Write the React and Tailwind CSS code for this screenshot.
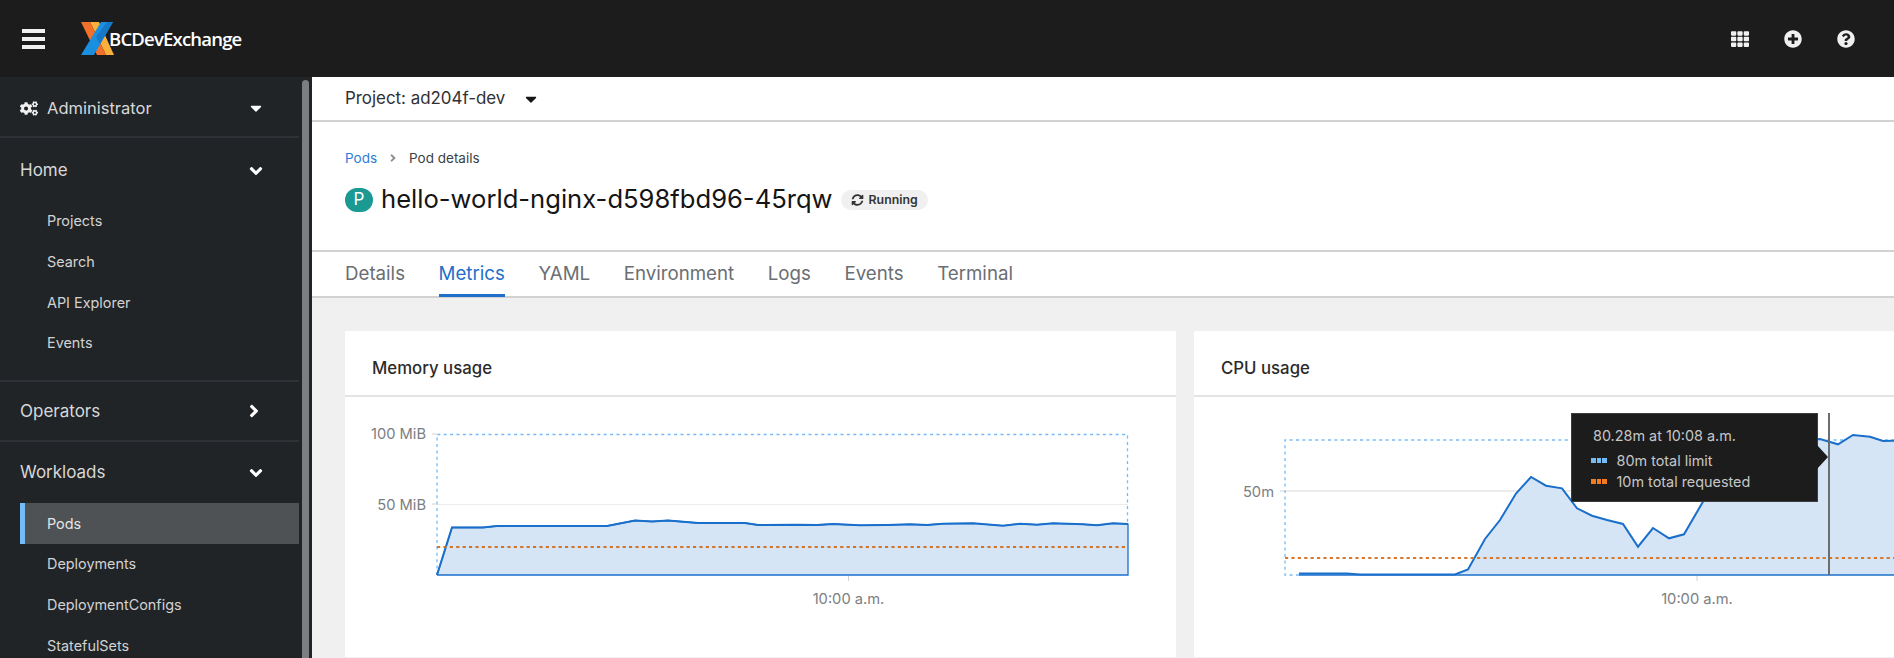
import React from 'react';
import {
  FaAngleDown, FaAngleRight, FaCaretDown, FaCogs, FaPlusCircle,
  FaQuestionCircle, FaSyncAlt, FaTh
} from 'react-icons/fa';

const sans = { fontFamily: '"Inter", "Liberation Sans", sans-serif' };

const memoryLine = '437,575 452,527.5 483,527.5 497,526 607,526 635,520.5 652,521.5 668,520.5 698,523 745,523 758,525 797,524.7 817,525 833,524 860,525.3 887,525 910,524.3 927,525 943,523.7 973,523.3 1003,525.7 1020,523.7 1037,524.7 1053,523.3 1083,524.3 1097,525.3 1113,523.3 1128,524';
const cpuLine = '1299,573.5 1347,573.5 1360,574.5 1455,574.5 1468,569.5 1485,539 1500,520 1516,493.5 1531,477 1546,485.7 1562,488.3 1577,508.3 1592,515.7 1607,520 1623,524 1638,546.7 1653,528 1669,538.3 1684,534.3 1703,501.7 1718,486 1733,470 1749,458 1764,449 1790,441 1820,439 1838,444.3 1853,435 1870,436.7 1883,441 1900,440.7';

const tabs = ['Details', 'Metrics', 'YAML', 'Environment', 'Logs', 'Events', 'Terminal'];

const SubItem = ({ label, active }) => (
  <div className={`h-[40.6px] ml-5 flex items-center text-[14.4px] ${active ? 'bg-[#4f5255] border-l-[5px] border-[#73bcf7] pl-[22px] text-[#e4e4e4]' : 'pl-[27px] text-[#d2d2d2]'}`}>
    {label}
  </div>
);

const Sidebar = () => (
  <div className="w-[312px] shrink-0 bg-[#212427] flex overflow-hidden text-[#d8d8d8]">
    <nav className="w-[299px] shrink-0">
      <div className="h-[61px] flex items-center pl-5 pr-[34px] pt-[3px] border-b-2 border-[#2e3135]">
        <FaCogs className="w-[18px] h-[15px] text-[#f0f0f0]" />
        <span className="ml-[9px] flex-1 text-[16.5px]">Administrator</span>
        <FaCaretDown className="w-[18px] h-[18px] text-white" />
      </div>

      <div className="border-b-2 border-[#2e3135] pb-[17px]">
        <div className="h-[63px] flex items-center justify-between pl-5 pr-[33px] pt-[2px] text-[17px]">
          Home
          <FaAngleDown className="w-[20px] h-[20px] text-white" />
        </div>
        <SubItem label="Projects" />
        <SubItem label="Search" />
        <SubItem label="API Explorer" />
        <SubItem label="Events" />
      </div>

      <div className="h-[60px] flex items-center justify-between pl-5 pr-[35px] border-b-2 border-[#2e3135] text-[17px]">
        Operators
        <FaAngleRight className="w-[20px] h-[20px] text-white" />
      </div>

      <div className="h-[61px] flex items-center justify-between pl-5 pr-[33px] text-[17px]">
        Workloads
        <FaAngleDown className="w-[20px] h-[20px] text-white" />
      </div>
      <SubItem label="Pods" active />
      <SubItem label="Deployments" />
      <SubItem label="DeploymentConfigs" />
      <SubItem label="StatefulSets" />
    </nav>
    <div className="w-[7px] ml-[3px] mt-[3px] bg-[#7c7e80] rounded-t-full" />
  </div>
);

const Logo = () => (
  <div className="flex items-center ml-[36px]">
    <svg width="33" height="34" viewBox="81 19 33 34">
      <polygon points="90,19 99,19 114,52 106,52" fill="#fbb03b" />
      <polygon points="81,19 90,19 106,52 97,52" fill="#f1702a" />
      <polygon points="101,19 113,19 94,52 81,52" fill="#1a8fe0" />
      <polygon points="107,19 113,19 100,41 96,34" fill="#1778c8" />
    </svg>
    <span className="-ml-[5px] text-[18.5px] font-semibold text-white tracking-[-0.8px]" style={{ fontFamily: '"Open Sans", sans-serif' }}>BCDevExchange</span>
  </div>
);

const Header = () => (
  <header className="h-[77px] shrink-0 bg-[#1c1c1c] flex items-center text-[#f0f0f0]">
    <div className="ml-[22px] w-[23px] flex flex-col gap-[4px]">
      <div className="h-[4px] bg-[#f0f0f0]" />
      <div className="h-[4px] bg-[#f0f0f0]" />
      <div className="h-[4px] bg-[#f0f0f0]" />
    </div>
    <Logo />
    <div className="ml-auto mr-[39px] flex items-center gap-[35px]">
      <FaTh className="w-[18px] h-[18px]" />
      <FaPlusCircle className="w-[18px] h-[18px]" />
      <FaQuestionCircle className="w-[18px] h-[18px]" />
    </div>
  </header>
);

const Axis = ({ x, y, label, dy = 5 }) => (
  <>
    <line x1={x - 5} x2={x} y1={y} y2={y} stroke="#d2d2d2" />
    <text x={x - 11} y={y + dy} textAnchor="end" fontSize="14.7" fill="#7b7e82" style={sans}>{label}</text>
  </>
);

const MemoryChart = () => (
  <svg width="831" height="260" viewBox="345 397 831 260" className="block">
    <line x1="437" x2="1128" y1="504.5" y2="504.5" stroke="#ececec" />
    <polyline points="437,575 437,434.5 1127.5,434.5 1127.5,524" fill="none" stroke="#73bcf7" strokeWidth="1.3" strokeDasharray="3 3.4" />
    <polygon points={`${memoryLine} 1128,575`} fill="#d6e5f6" />
    <polyline points={`${memoryLine} 1128,575 437,575`} fill="none" stroke="#1a6fcb" strokeWidth="1.3" />
    <polyline points={memoryLine} fill="none" stroke="#1a6fcb" strokeWidth="2" />
    <line x1="437" x2="1128" y1="547" y2="547" stroke="#d0742a" strokeWidth="2" strokeDasharray="3.2 3.2" />
    <Axis x={437} y={434} label="100 MiB" />
    <Axis x={437} y={504} label="50 MiB" dy={6} />
    <line x1="848.5" x2="848.5" y1="576" y2="581" stroke="#d2d2d2" />
    <text x="848.5" y="604" textAnchor="middle" fontSize="14.7" fill="#7b7e82" style={sans}>10:00 a.m.</text>
  </svg>
);

const CpuChart = () => (
  <svg width="831" height="260" viewBox="1194 397 831 260" className="block">
    <line x1="1285" x2="1900" y1="491" y2="491" stroke="#ececec" strokeWidth="2" />
    <polyline points="1299,575 1285,575 1285,440 1900,440" fill="none" stroke="#73bcf7" strokeWidth="1.3" strokeDasharray="3 3.4" />
    <polygon points={`${cpuLine} 1900,575 1299,575`} fill="#d6e5f6" />
    <line x1="1299" x2="1900" y1="575" y2="575" stroke="#1a6fcb" strokeWidth="1.3" />
    <polyline points={cpuLine} fill="none" stroke="#1a6fcb" strokeWidth="2" />
    <line x1="1285" x2="1900" y1="558" y2="558" stroke="#d9772b" strokeWidth="2" strokeDasharray="3.2 3.2" />
    <Axis x={1285} y={491} label="50m" dy={6} />
    <line x1="1697" x2="1697" y1="576" y2="581" stroke="#d2d2d2" />
    <text x="1697" y="604" textAnchor="middle" fontSize="14.7" fill="#7b7e82" style={sans}>10:00 a.m.</text>
    <line x1="1829" x2="1829" y1="413" y2="575" stroke="#6a6e73" strokeWidth="2" />
  </svg>
);

const Swatch = ({ color }) => (
  <div className="flex gap-[1px] mr-[10px]">
    <div className={`w-[4.5px] h-[5px] ${color}`} />
    <div className={`w-[4.5px] h-[5px] ${color}`} />
    <div className={`w-[4.5px] h-[5px] ${color}`} />
  </div>
);

const Tooltip = () => (
  <div className="absolute left-[377px] top-[16px] w-[247px] h-[89px] bg-[#1c1c1c] border border-[#3c3c3c] pl-[19px] pt-[11px] text-[14.4px] text-[#c6c6c6]">
    <div className="h-[22px] flex items-center pl-[2px]">80.28m at 10:08 a.m.</div>
    <div className="mt-[3px] h-[21px] flex items-center"><Swatch color="bg-[#73bcf7]" />80m total limit</div>
    <div className="h-[21px] flex items-center"><Swatch color="bg-[#ef7b22]" />10m total requested</div>
    <div className="absolute left-[245px] top-[31px] w-0 h-0 border-y-[12px] border-y-transparent border-l-[11px] border-l-[#1c1c1c]" />
  </div>
);

const Card = ({ title, children }) => (
  <div className="w-[831px] h-[326px] shrink-0 bg-white">
    <div className="h-[66px] flex items-center pl-[27px] pt-[11px] border-b-2 border-[#e4e4e4] text-[16.8px] font-medium text-[#2b2b2b]">
      {title}
    </div>
    <div className="relative">{children}</div>
  </div>
);

export default function App() {
  return (
    <div className="w-[1894px] h-[658px] overflow-hidden flex flex-col bg-white" style={sans}>
      <Header />
      <div className="flex-1 flex min-h-0">
        <Sidebar />
        <main className="flex-1 min-w-0 overflow-hidden flex flex-col">
          <div className="h-[45px] shrink-0 flex items-center pl-[33px] border-b-2 border-[#d2d2d2] text-[16.9px] text-[#2f3133]">
            Project: ad204f-dev
            <FaCaretDown className="ml-[17px] w-[18px] h-[18px] text-[#151515]" />
          </div>

          <div className="h-[130px] shrink-0 pl-[33px] pt-[26px] border-b-2 border-[#d2d2d2]">
            <div className="h-[20px] flex items-center text-[13.5px] text-[#3c3f42]">
              <span className="text-[#2b7bd6]">Pods</span>
              <FaAngleRight className="mx-[10px] w-[12px] h-[12px] text-[#8a8d90]" />
              Pod details
            </div>
            <div className="mt-[20px] h-[24px] flex items-center">
              <span className="w-[28px] h-[24px] rounded-full bg-[#1a9a92] text-white text-[17px] flex items-center justify-center">P</span>
              <h1 className="ml-[8px] -mt-[2px] text-[25.6px] leading-none text-[#151515]">hello-world-nginx-d598fbd96-45rqw</h1>
              <span className="ml-[8px] h-[20px] w-[87px] pl-[10px] rounded-full bg-[#f0f0f0] flex items-center gap-[5px] text-[12.3px] font-semibold text-[#333]">
                <FaSyncAlt className="w-[13px] h-[12px]" />
                Running
              </span>
            </div>
          </div>

          <div className="h-[46px] shrink-0 pl-[33px] flex gap-[33.6px] border-b-2 border-[#d2d2d2] text-[18.7px] text-[#6a6e73]">
            {tabs.map(t => (
              <div key={t} className={`flex items-center h-[45px] border-y-[3px] border-t-transparent ${t === 'Metrics' ? 'text-[#1f6fcb] border-b-[#1f6fcb]' : 'border-b-transparent'}`}>
                {t}
              </div>
            ))}
          </div>

          <div className="flex-1 bg-[#f0f0f0] pl-[33px] pt-[33px] flex gap-[18px] overflow-hidden">
            <Card title="Memory usage">
              <MemoryChart />
            </Card>
            <Card title="CPU usage">
              <CpuChart />
              <Tooltip />
            </Card>
          </div>
        </main>
      </div>
    </div>
  );
}
